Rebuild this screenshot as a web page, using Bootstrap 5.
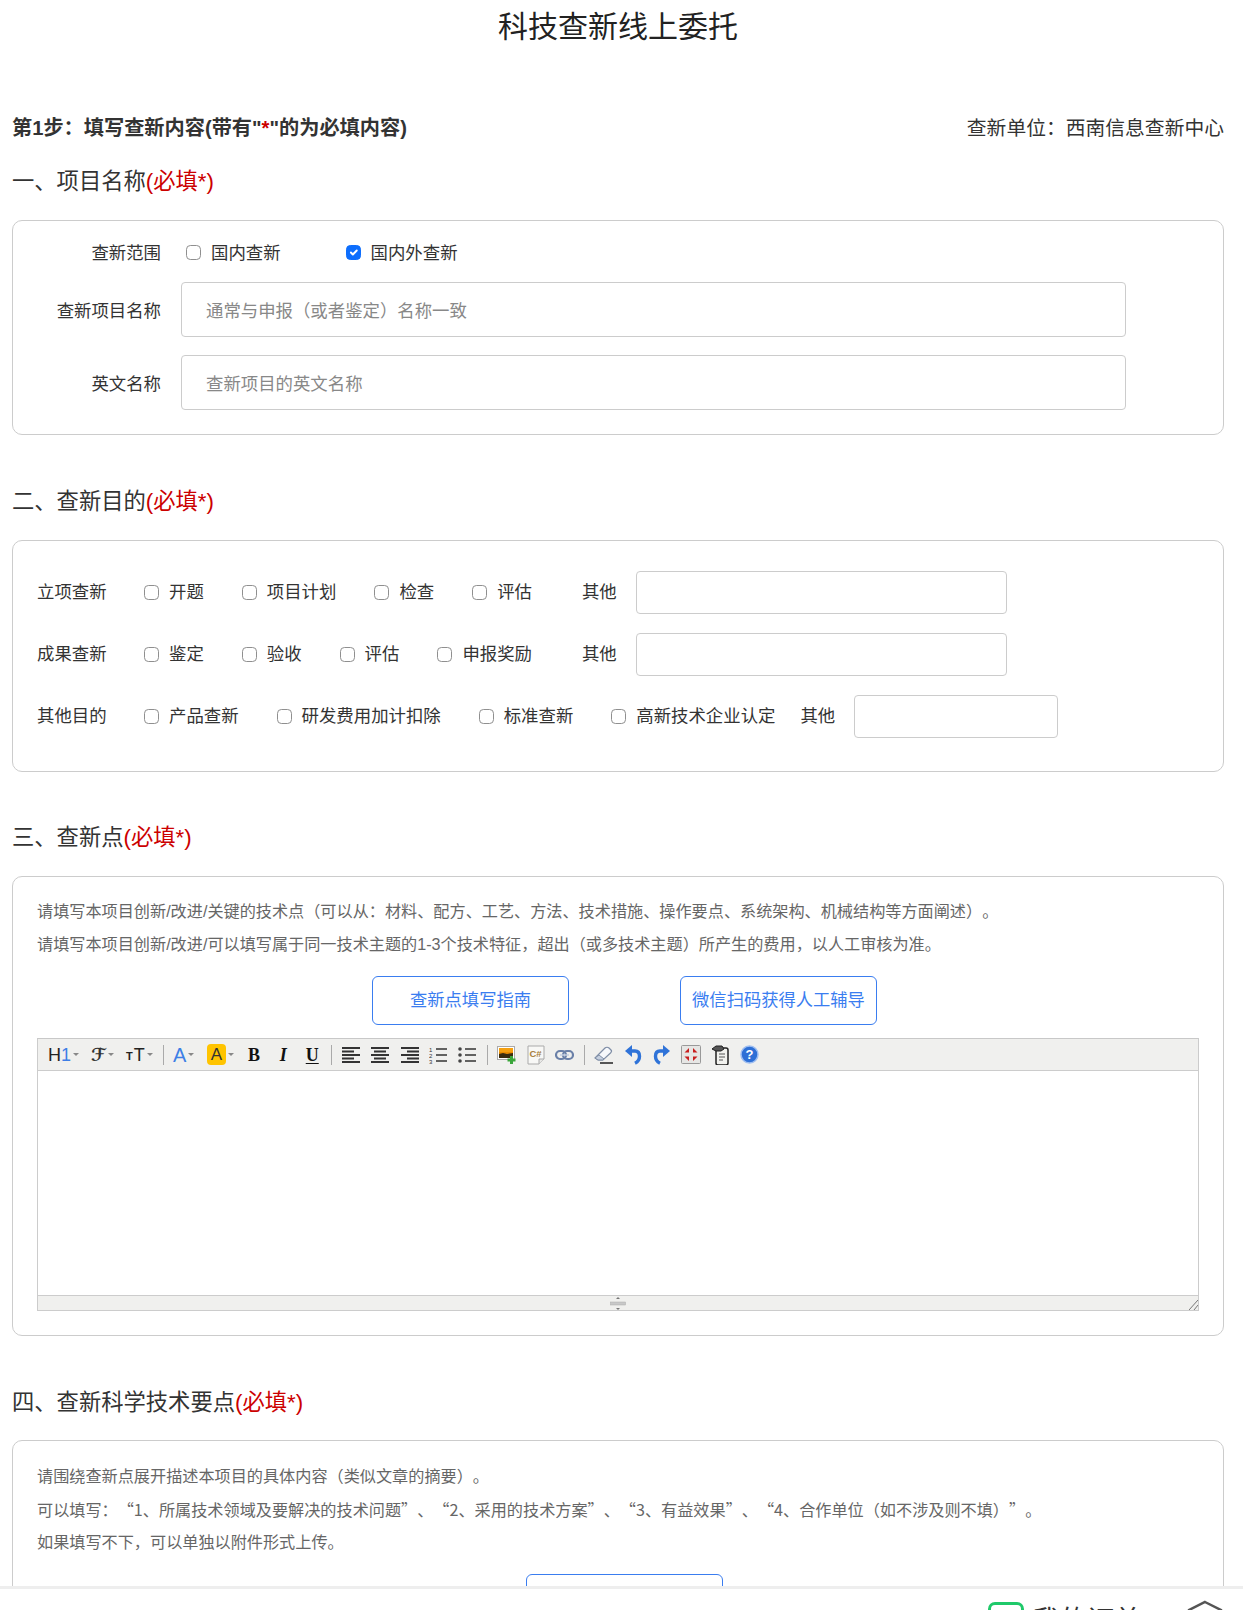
<!DOCTYPE html>
<html lang="zh-CN">
<head>
    <meta charset="UTF-8">
    <meta name="viewport" content="width=device-width, initial-scale=1.0">
    <title>科技查新线上委托</title>

    <link href="https://cdn.jsdelivr.net/npm/bootstrap@5.3.0/dist/css/bootstrap.min.css" rel="stylesheet">

    <style>
        html, body { height: 100%; overflow: hidden; }
        body {
            font-family: "Liberation Sans", "Noto Sans CJK SC", sans-serif;
            color: #333;
            text-spacing-trim: space-all;
        }
        .page-shell { height: 100vh; }
        .page-main { padding: 0 19px 0 12px; overflow: hidden; min-height: 0; }

        .page-title { font-size: 30px; line-height: 54px; height: 54px; margin: 0; color: #222; font-weight: 400; text-align: center; }
        .step-row { margin-top: 59px; height: 30px; line-height: 30px; font-size: 19.8px; }
        .step-row b { font-weight: 700; font-size: 20.2px; }
        .req { color: #c00; }
        .sec-title { font-size: 22.3px; font-weight: 400; line-height: 42px; height: 40px; margin: 46px 0 19px; color: #333; }
        .sec-first { margin-top: 18px; }
        .sec-third { margin-top: 45px; }
        .sec-fourth { margin-bottom: 18px; }

        .form-box { border: 1px solid #ccc; border-radius: 10px; background: #fff; font-size: 17.4px; }
        .box-name { padding: 18px 0 0; height: 215px; }
        .box-goal { padding: 30px 24px 0; height: 232px; }
        .box-point { padding: 0 24px; height: 460px; }
        .box-tech { padding: 0 24px; height: 300px; }

        .name-label { width: 148px; margin-right: 20px; text-align: right; }
        .input-row .name-label { padding-top: 3px; }
        .name-input { width: 945px; height: 55px; padding: 9px 12px 5px 24px; border-color: #ccc; border-radius: 4px; font-size: 17.4px; }
        .name-input::placeholder, .goal-input::placeholder { color: #888; }
        .check-row { height: 28px; margin-bottom: 15px; }
        .check-start { margin-left: 5px; }
        .input-row { margin-bottom: 18px; }

        .form-box .form-check-input { width: 15px; height: 15px; margin: 0 10px 0 0; border-color: #8f8f8f; flex: none; }
        .form-box .form-check-input:checked { background-color: #0d6efd; border-color: #0d6efd; }
        .opt-item { display: inline-flex; align-items: center; margin-right: 38px; white-space: nowrap; }
        .opt-wide { margin-right: 65px; }
        .opt-end { margin-right: 50px; }
        .opt-end-tight { margin-right: 25px; }
        .goal-name { width: 70px; margin-right: 37px; flex: none; }
        .goal-row { height: 43px; margin-bottom: 19px; }
        .goal-other { margin-right: 19px; flex: none; }
        .goal-input { height: 43px; width: 371px; border-color: #ccc; border-radius: 4px; flex: none; }
        .goal-input-sm { width: 204px; }

        .hint-text { font-size: 16.15px; line-height: 33px; color: #666; margin: 0; }
        .hint-first { padding-top: 18px; }
        .hint-first-tech { padding-top: 19px; }
        .hint-wide { font-family: "Noto Sans CJK SC", "Liberation Sans", sans-serif; }
        .guide-row { margin: 15px 0 13px; padding-left: 13px; gap: 111px; }
        .guide-btn { width: 197px; height: 49px; padding: 0; color: #3a7df0; border: 1px solid #3a7df0; border-radius: 6px; font-size: 17.3px; background: #fff; line-height: 47px; }

        .edit-wrap { border: 1px solid #ccc; border-top-color: #c8c8c8; }
        .edit-bar { height: 32px; padding-left: 10px; background: #f0f0ee; border-bottom: 1px solid #ccc; font-size: 18px; color: #222; }
        .edit-body { height: 224px; background: #fff; }
        .edit-foot { height: 15px; background: #f0f0ee; border-top: 1px solid #ccc; display: grid; grid-template-columns: 1fr auto 1fr; align-items: center; }
        .foot-grip { justify-self: end; }
        .tb-item { height: 24px; display: flex; align-items: center; flex: none; line-height: 1; }
        .tb-cell { width: 29.1px; justify-content: center; }
        .tb-h { width: 43px; }
        .tb-f { width: 35px; }
        .tb-t { width: 32px; }
        .tb-a { width: 34px; margin-left: 5px; }
        .tb-y { width: 32.5px; }
        .tb-sep { width: 10px; justify-content: center; }
        .tb-sep i { display: block; width: 1px; height: 20px; background: #aaa; }
        .tb-caret { width: 0; height: 0; margin-left: 2px; border: 3px solid transparent; border-top: 3px solid #888; border-bottom: 0; }
        .tb-blue { color: #3d7fe6; }
        .tb-script { font-family: "DejaVu Sans", serif; font-weight: 700; font-size: 18px; color: #333; }
        .tb-small { font-size: 11px; font-weight: 700; margin-right: 1px; margin-top: 4px; }
        .tb-mark { background: #ffc400; border-radius: 4px; width: 19px; height: 21px; display: flex; align-items: center; justify-content: center; color: #333; font-size: 17px; }
        .tb-serif { font-family: "Liberation Serif", serif; font-weight: 700; font-size: 18px; color: #111; }
        .tb-under { text-decoration: underline; text-underline-offset: 2px; }
        .tb-icon { display: block; }

        .foot-bar { height: 24px; flex: none; border-top: 3px solid #eee; background: #fff; overflow: hidden; padding-left: 988px; }
        .foot-check { width: 36px; height: 36px; margin-top: 13px; border: 3px solid #1fc96a; border-radius: 7px; flex: none; }
        .foot-text { font-size: 27px; line-height: 36px; margin: 14px 0 0 9px; white-space: nowrap; color: #333; }
        .foot-hex { margin: 11px 0 0 46px; flex: none; }
    </style>
</head>
<body>
<div class="page-shell d-flex flex-column">
    <div class="page-main flex-grow-1">
        <h1 class="page-title">科技查新线上委托</h1>

        <div class="step-row d-flex justify-content-between">
            <b>第1步&#xFF1A;填写查新内容(带有"<span class="req">*</span>"的为必填内容)</b>
            <span>查新单位&#xFF1A;西南信息查新中心</span>
        </div>

        <!-- 一、项目名称 -->
        <h2 class="sec-title sec-first">一、项目名称<span class="req">(必填*)</span></h2>
        <div class="form-box box-name">
            <div class="d-flex align-items-center check-row">
                <div class="name-label">查新范围</div>
                <label class="opt-item opt-wide check-start"><input class="form-check-input" type="checkbox">国内查新</label>
                <label class="opt-item"><input class="form-check-input" type="checkbox" checked>国内外查新</label>
            </div>
            <div class="d-flex align-items-center input-row">
                <div class="name-label">查新项目名称</div>
                <input class="form-control name-input" type="text" placeholder="通常与申报&#xFF08;或者鉴定&#xFF09;名称一致">
            </div>
            <div class="d-flex align-items-center input-row">
                <div class="name-label">英文名称</div>
                <input class="form-control name-input" type="text" placeholder="查新项目的英文名称">
            </div>
        </div>

        <!-- 二、查新目的 -->
        <h2 class="sec-title">二、查新目的<span class="req">(必填*)</span></h2>
        <div class="form-box box-goal">
            <div class="d-flex align-items-center goal-row">
                <div class="goal-name">立项查新</div>
                <label class="opt-item"><input class="form-check-input" type="checkbox">开题</label>
                <label class="opt-item"><input class="form-check-input" type="checkbox">项目计划</label>
                <label class="opt-item"><input class="form-check-input" type="checkbox">检查</label>
                <label class="opt-item opt-end"><input class="form-check-input" type="checkbox">评估</label>
                <div class="goal-other">其他</div>
                <input class="form-control goal-input" type="text">
            </div>
            <div class="d-flex align-items-center goal-row">
                <div class="goal-name">成果查新</div>
                <label class="opt-item"><input class="form-check-input" type="checkbox">鉴定</label>
                <label class="opt-item"><input class="form-check-input" type="checkbox">验收</label>
                <label class="opt-item"><input class="form-check-input" type="checkbox">评估</label>
                <label class="opt-item opt-end"><input class="form-check-input" type="checkbox">申报奖励</label>
                <div class="goal-other">其他</div>
                <input class="form-control goal-input" type="text">
            </div>
            <div class="d-flex align-items-center goal-row">
                <div class="goal-name">其他目的</div>
                <label class="opt-item"><input class="form-check-input" type="checkbox">产品查新</label>
                <label class="opt-item"><input class="form-check-input" type="checkbox">研发费用加计扣除</label>
                <label class="opt-item"><input class="form-check-input" type="checkbox">标准查新</label>
                <label class="opt-item opt-end-tight"><input class="form-check-input" type="checkbox">高新技术企业认定</label>
                <div class="goal-other">其他</div>
                <input class="form-control goal-input goal-input-sm" type="text">
            </div>
        </div>

        <!-- 三、查新点 -->
        <h2 class="sec-title sec-third">三、查新点<span class="req">(必填*)</span></h2>
        <div class="form-box box-point">
            <p class="hint-text hint-first">请填写本项目创新/改进/关键的技术点&#xFF08;可以从&#xFF1A;材料、配方、工艺、方法、技术措施、操作要点、系统架构、机械结构等方面阐述&#xFF09;。</p>
            <p class="hint-text">请填写本项目创新/改进/可以填写属于同一技术主题的1-3个技术特征&#xFF0C;超出&#xFF08;或多技术主题&#xFF09;所产生的费用&#xFF0C;以人工审核为准。</p>
            <div class="d-flex justify-content-center guide-row">
                <button class="btn guide-btn" type="button">查新点填写指南</button>
                <button class="btn guide-btn" type="button">微信扫码获得人工辅导</button>
            </div>

            <div class="edit-wrap">
                <div class="edit-bar d-flex align-items-center">
                    <div class="tb-item tb-h"><span>H</span><span class="tb-blue">1</span><span class="tb-caret"></span></div>
                    <div class="tb-item tb-f"><span class="tb-script">ℱ</span><span class="tb-caret"></span></div>
                    <div class="tb-item tb-t"><span class="tb-small">T</span><span>T</span><span class="tb-caret"></span></div>
                    <div class="tb-item tb-sep"><i></i></div>
                    <div class="tb-item tb-a"><span class="tb-blue fs-5">A</span><span class="tb-caret"></span></div>
                    <div class="tb-item tb-y"><span class="tb-mark">A</span><span class="tb-caret"></span></div>
                    <div class="tb-item tb-cell"><span class="tb-serif">B</span></div>
                    <div class="tb-item tb-cell"><span class="tb-serif fst-italic">I</span></div>
                    <div class="tb-item tb-cell"><span class="tb-serif tb-under">U</span></div>
                    <div class="tb-item tb-sep"><i></i></div>
                    <div class="tb-item tb-cell">
                        <svg class="tb-icon" width="18" height="16" viewBox="0 0 18 16" stroke="#333" stroke-width="1.800"><path d="M0 1h18M0 4.500h12M0 8h18M0 11.500h12M0 15h18"/></svg>
                    </div>
                    <div class="tb-item tb-cell">
                        <svg class="tb-icon" width="18" height="16" viewBox="0 0 18 16" stroke="#333" stroke-width="1.800"><path d="M0 1h18M3 4.500h12M0 8h18M3 11.500h12M0 15h18"/></svg>
                    </div>
                    <div class="tb-item tb-cell">
                        <svg class="tb-icon" width="18" height="16" viewBox="0 0 18 16" stroke="#333" stroke-width="1.800"><path d="M0 1h18M6 4.500h12M0 8h18M6 11.500h12M0 15h18"/></svg>
                    </div>
                    <div class="tb-item tb-cell">
                        <svg class="tb-icon" width="19" height="18" viewBox="0 0 19 18"><text x="0" y="6" font-size="6" font-family="Liberation Sans" fill="#333">1</text><text x="0" y="12" font-size="6" font-family="Liberation Sans" fill="#333">2</text><text x="0" y="18" font-size="6" font-family="Liberation Sans" fill="#333">3</text><path d="M7 3h11M7 9h11M7 15h11" stroke="#333" stroke-width="1.600"/></svg>
                    </div>
                    <div class="tb-item tb-cell">
                        <svg class="tb-icon" width="19" height="18" viewBox="0 0 19 18"><circle cx="2" cy="3" r="1.800" fill="#444"/><circle cx="2" cy="9" r="1.800" fill="#444"/><circle cx="2" cy="15" r="1.800" fill="#444"/><path d="M7 3h11M7 9h11M7 15h11" stroke="#333" stroke-width="1.600"/></svg>
                    </div>
                    <div class="tb-item tb-sep"><i></i></div>
                    <div class="tb-item tb-cell">
                        <svg class="tb-icon" width="20" height="20" viewBox="0 0 20 20"><rect x="0.500" y="1.500" width="17" height="13" fill="#fff" stroke="#aaa"/><rect x="2" y="3" width="14" height="6" fill="#f5a010"/><rect x="2" y="7" width="14" height="3" fill="#e88b00"/><path d="M2 13V9l4-1 4 1 6-1v5z" fill="#3a2c10"/><path d="M14.500 11v8M10.500 15h8" stroke="#3aa63a" stroke-width="3"/></svg>
                    </div>
                    <div class="tb-item tb-cell">
                        <svg class="tb-icon" width="18" height="20" viewBox="0 0 18 20"><path d="M1 1h16v13l-5 5H1z" fill="#f8f8f6" stroke="#aaa"/><path d="M17 14h-5v5" fill="#e8e8e6" stroke="#aaa"/><text x="2.500" y="12" font-size="9.500" font-weight="700" font-family="Liberation Sans" fill="#a87f3c">C#</text></svg>
                    </div>
                    <div class="tb-item tb-cell">
                        <svg class="tb-icon" width="19" height="12" viewBox="0 0 19 12" fill="none"><rect x="1" y="2" width="10" height="8" rx="4" stroke="#6a80a8" stroke-width="2.200"/><rect x="8" y="2" width="10" height="8" rx="4" stroke="#6a80a8" stroke-width="2.200"/><path d="M5 6h9" stroke="#c4cfe0" stroke-width="1.500"/></svg>
                    </div>
                    <div class="tb-item tb-sep"><i></i></div>
                    <div class="tb-item tb-cell">
                        <svg class="tb-icon" width="20" height="19" viewBox="0 0 20 19"><path d="M1 13L11 3c1-1 3-1 4 0l2 2c1 1 .500 2-.500 3L9 15H4z" fill="#f6f8fb" stroke="#7f8ea6" stroke-width="1.200"/><path d="M1 13l3 2h5l1-1-5-4z" fill="#c6d0df" stroke="#7f8ea6"/><path d="M6 18h13" stroke="#222" stroke-width="1.500"/></svg>
                    </div>
                    <div class="tb-item tb-cell">
                        <svg class="tb-icon" width="18" height="20" viewBox="0 0 18 20"><path d="M7 6h4c3 0 4.500 2.200 4.500 5.200 0 3.200-2 5.800-4.500 7" fill="none" stroke="#2f73d8" stroke-width="3.400"/><path d="M8 0v12L1 6z" fill="#2f73d8"/></svg>
                    </div>
                    <div class="tb-item tb-cell">
                        <svg class="tb-icon" width="18" height="20" viewBox="0 0 18 20"><path d="M11 6H7C4 6 2.500 8.200 2.500 11.200c0 3.200 2 5.800 4.500 7" fill="none" stroke="#2f73d8" stroke-width="3.400"/><path d="M10 0v12l7-6z" fill="#2f73d8"/></svg>
                    </div>
                    <div class="tb-item tb-cell">
                        <svg class="tb-icon" width="20" height="19" viewBox="0 0 20 19"><rect x="0.500" y="0.500" width="19" height="18" rx="1" fill="#e6e6e4" stroke="#999"/><path d="M8 7.500H3.500L8 3zM12 7.500H16.500L12 3zM8 11.500H3.500L8 16zM12 11.500H16.500L12 16z" fill="#c81e1e"/></svg>
                    </div>
                    <div class="tb-item tb-cell">
                        <svg class="tb-icon" width="18" height="20" viewBox="0 0 18 20"><path d="M5 3h10c1 0 2 1 2 2v13c0 1-1 2-2 2H7c-1 0-2-1-2-2z" fill="#f2f2ee" stroke="#222" stroke-width="1.500"/><path d="M1 4l4-3h6l2 3-3 2H5z" fill="#555" stroke="#222"/><path d="M8 9h6M8 12h6M8 15h4" stroke="#555"/></svg>
                    </div>
                    <div class="tb-item tb-cell">
                        <svg class="tb-icon" width="19" height="19" viewBox="0 0 19 19"><circle cx="9.500" cy="9.500" r="8.500" fill="#2d6fd6" stroke="#9dbdf0" stroke-width="1.500"/><text x="9.500" y="14" text-anchor="middle" font-size="13" font-weight="700" font-family="Liberation Sans" fill="#fff">?</text></svg>
                    </div>
                </div>
                <div class="edit-body"></div>
                <div class="edit-foot">
                    <span></span>
                    <svg width="16" height="13" viewBox="0 0 16 13"><path d="M8 0l2 2H6zM8 13l2-2H6z" fill="#777"/><rect x="0.500" y="5" width="15" height="3" fill="#c8c8c8" stroke="#aaa" stroke-width="0.500"/></svg>
                    <svg class="foot-grip" width="9" height="13" viewBox="0 0 9 13"><path d="M0 13L9 3M5 13l4-5" stroke="#777"/></svg>
                </div>
            </div>
        </div>

        <!-- 四、查新科学技术要点 -->
        <h2 class="sec-title sec-fourth">四、查新科学技术要点<span class="req">(必填*)</span></h2>
        <div class="form-box box-tech">
            <p class="hint-text hint-first-tech">请围绕查新点展开描述本项目的具体内容&#xFF08;类似文章的摘要&#xFF09;。</p>
            <p class="hint-text hint-wide">可以填写&#xFF1A;&#x201C;1、所属技术领域及要解决的技术问题&#x201D;、&#x201C;2、采用的技术方案&#x201D;、&#x201C;3、有益效果&#x201D;、&#x201C;4、合作单位&#xFF08;如不涉及则不填&#xFF09;&#x201D;。</p>
            <p class="hint-text">如果填写不下&#xFF0C;可以单独以附件形式上传。</p>
            <div class="d-flex justify-content-center guide-row">
                <button class="btn guide-btn" type="button">科学技术要点填写指南</button>
            </div>
        </div>
    </div>

    <!-- 底部栏 -->
    <div class="foot-bar d-flex align-items-start">
        <div class="foot-check"></div>
        <div class="foot-text">我的订单</div>
        <svg class="foot-hex" width="36" height="40" viewBox="0 0 36 40" fill="none" stroke="#555" stroke-width="2.500"><path d="M18 2L34 10V30L18 38L2 30V10Z"/><path d="M18 12v4"/></svg>
    </div>
</div>

<script src="https://cdn.jsdelivr.net/npm/bootstrap@5.3.0/dist/js/bootstrap.bundle.min.js"></script>
</body>
</html>
